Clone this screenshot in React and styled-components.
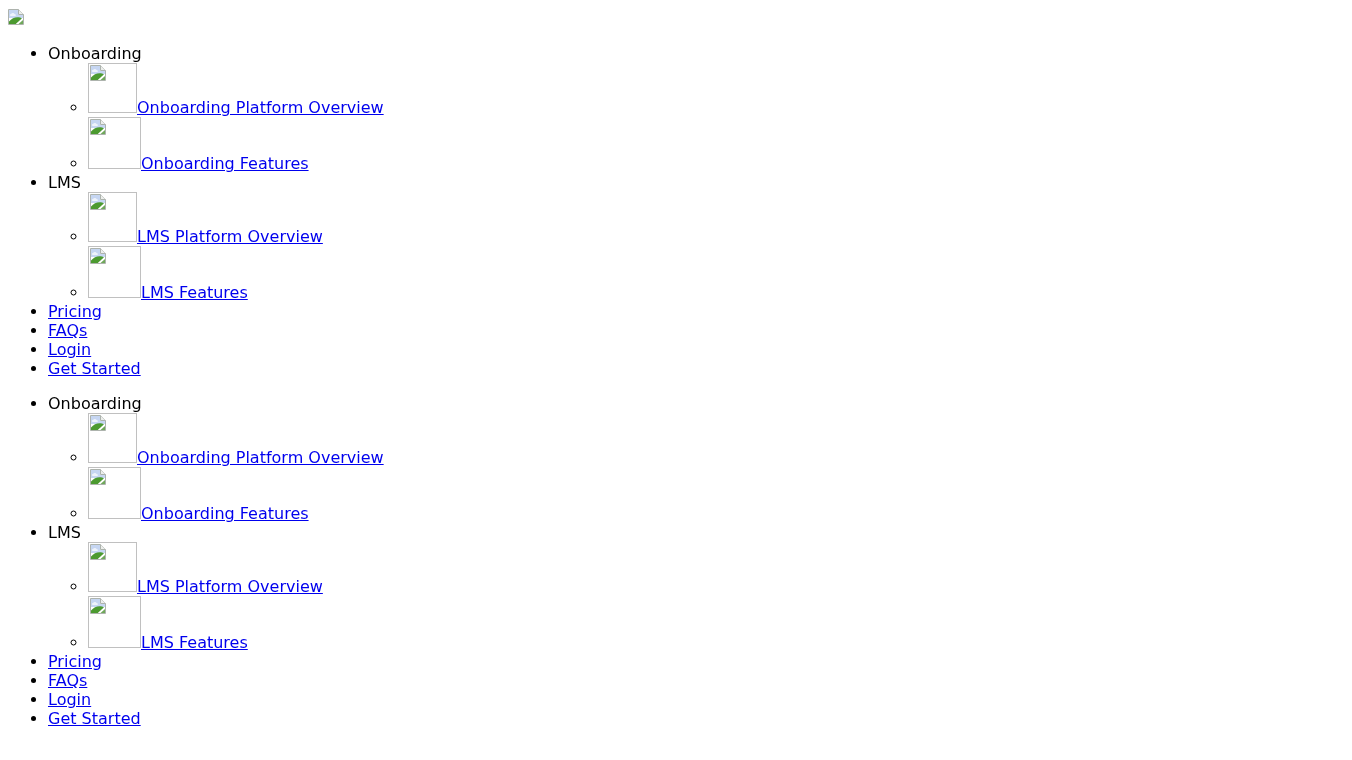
import React from "react";
import styled, { createGlobalStyle } from "styled-components";

const GlobalStyle = createGlobalStyle`
  body {
    font-family: "DejaVu Sans", sans-serif;
    font-size: 16px;
    color: #000;
    background: #fff;
  }
`;

// the browser's missing picture glyph
const BrokenIcon = () => (
  <IconSvg viewBox="0 0 16 16" width="16" height="16">
    <path d="M0.5 0.5H10.5L15.5 5.5V15.5H0.5Z" fill="#fff" stroke="#adb3ad" />
    <path d="M1 1H10V6H15V9H1Z" fill="#c6d6f2" />
    <path d="M3 5C4 3.5 6 4 6.5 5C8 5 8.5 7 7 7H3C1.5 7 1.5 5 3 5Z" fill="#eef3fb" />
    <path d="M1 15V12.5C4 9 8 7.5 12 8.5C13 8.8 13.5 9 14 9.5L8 15Z" fill="#4c9a30" />
    <path d="M8 15L14 9.5L15 10.5L10 15Z" fill="#fff" />
    <path d="M10.5 15L15 11V15Z" fill="#6fa85a" />
    <path d="M10.5 0.5V5.5H15.5" fill="#eceeec" stroke="#adb3ad" />
  </IconSvg>
);

const groups = [
  {
    title: "Onboarding",
    links: [
      { label: "Onboarding Platform Overview", wide: false },
      { label: "Onboarding Features", wide: true },
    ],
  },
  {
    title: "LMS",
    links: [
      { label: "LMS Platform Overview", wide: false },
      { label: "LMS Features", wide: true },
    ],
  },
];

const plainLinks = ["Pricing", "FAQs", "Login", "Get Started"];

const Menu = () => (
  <MenuList>
    {groups.map((group) => (
      <li key={group.title}>
        {group.title}
        <SubList>
          {group.links.map((link) => (
            <li key={link.label}>
              <MenuLink href="#">
                <ImageFrame $wide={link.wide}>
                  <BrokenIcon />
                </ImageFrame>
                {link.label}
              </MenuLink>
            </li>
          ))}
        </SubList>
      </li>
    ))}
    {plainLinks.map((label) => (
      <li key={label}>
        <MenuLink href="#">{label}</MenuLink>
      </li>
    ))}
  </MenuList>
);

const App = () => (
  <Page>
    <GlobalStyle />
    <Logo>
      <BrokenIcon />
    </Logo>
    <Menu />
    <Menu />
  </Page>
);

export default App;

const Page = styled.div`
  will-change: transform;
`;

const IconSvg = styled.svg`
  display: block;
`;

const Logo = styled.div`
  height: 20px;
  padding-top: 1px;
  box-sizing: border-box;
`;

const MenuList = styled.ul`
  margin: 16px 0;
  padding-left: 40px;
  list-style: disc;
`;

const SubList = styled.ul`
  margin: 0;
  padding-left: 40px;
  list-style: circle;
`;

const MenuLink = styled.a`
  color: #0000ee;
  text-decoration: underline;
`;

const ImageFrame = styled.span`
  display: inline-block;
  box-sizing: border-box;
  overflow: hidden;
  width: ${(p) => (p.$wide ? "53px" : "49px")};
  height: ${(p) => (p.$wide ? "52px" : "50px")};
  padding: 1px;
  border: 1px solid #c0c0c0;
`;
